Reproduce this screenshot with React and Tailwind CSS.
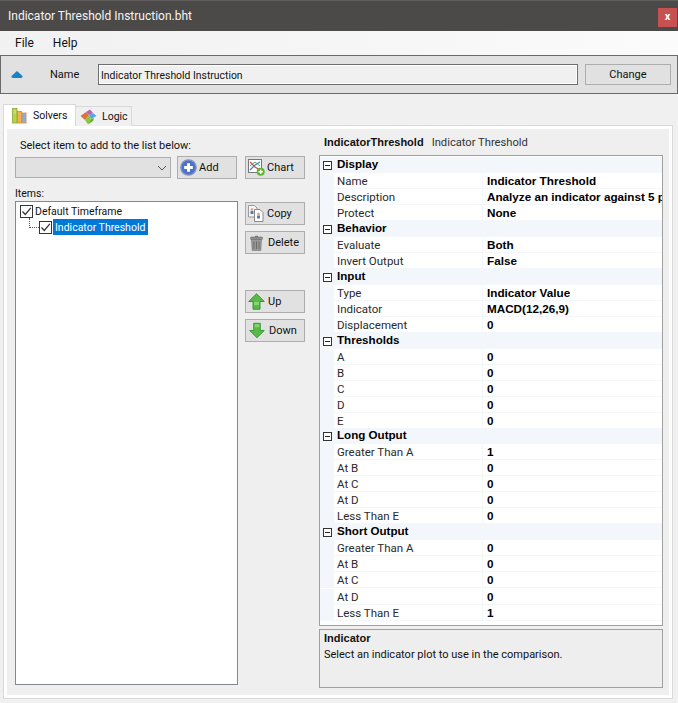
import React from "react";

const sections = [
    { title: "Display", rows: [["Name", "Indicator Threshold"], ["Description", "Analyze an indicator against 5 price levels"], ["Protect", "None"]] },
    { title: "Behavior", rows: [["Evaluate", "Both"], ["Invert Output", "False"]] },
    { title: "Input", rows: [["Type", "Indicator Value"], ["Indicator", "MACD(12,26,9)"], ["Displacement", "0"]] },
    { title: "Thresholds", rows: [["A", "0"], ["B", "0"], ["C", "0"], ["D", "0"], ["E", "0"]] },
    { title: "Long Output", rows: [["Greater Than A", "1"], ["At B", "0"], ["At C", "0"], ["At D", "0"], ["Less Than E", "0"]], className: "-mt-px" },
    { title: "Short Output", rows: [["Greater Than A", "0"], ["At B", "0"], ["At C", "0"], ["At D", "0"], ["Less Than E", "1"]], stepBefore: "At D" },
];

const BooksIcon = () => (
    <svg width="15" height="16" viewBox="0 0 15 16" className="shrink-0">
        <rect x="0.500" y="0.500" width="4.500" height="14.500" fill="#b5d34a" stroke="#8aa838" strokeWidth="0.800" />
        <path d="M1.500 3h2.500M1.500 5h2.500" stroke="#e6f0b0" strokeWidth="0.700" />
        <rect x="5.500" y="3.500" width="4" height="11.500" fill="#f6b04c" stroke="#d98a2a" strokeWidth="0.800" />
        <rect x="10" y="5" width="4" height="10" fill="#7fb2e5" stroke="#e58a4a" strokeWidth="0.900" />
    </svg>
);

const PuzzleIcon = () => (
    <svg width="17" height="16" viewBox="0 0 17 16" className="shrink-0">
        <path d="M0.500 7 L6 3 L9 6 L5 11 Z" fill="#e2703a" />
        <path d="M6 3 L10 0.500 L13 4 L9 6 Z" fill="#c05fb5" />
        <path d="M9 6 L13 4 L16.500 7 L11 10 Z" fill="#5aa5e0" />
        <path d="M5 11 L9 6 L11 10 L8 15.500 Z" fill="#8cc63f" />
        <path d="M11 10 L14 9 L13 12 L8 15.500 Z" fill="#5fae3a" />
    </svg>
);

const AddIcon = () => (
    <svg width="17" height="17" viewBox="0 0 17 17" className="shrink-0">
        <circle cx="8.500" cy="8.500" r="7.700" fill="#4b74c9" stroke="#8d94bf" strokeWidth="1.300" />
        <path d="M8.500 4.200v8.600M4.200 8.500h8.600" stroke="#fff" strokeWidth="3" />
    </svg>
);

const ChartIcon = () => (
    <svg width="17" height="17" viewBox="0 0 17 17" className="shrink-0">
        <rect x="0.500" y="0.500" width="13" height="13" fill="#fff" stroke="#777" />
        <path d="M2 3 L7 8 L12 11" stroke="#d94040" strokeWidth="1.200" fill="none" />
        <path d="M2 11 L7 6 L12 3" stroke="#3f7fd0" strokeWidth="1.200" fill="none" />
        <path d="M2 7 L7 3 L12 7" stroke="#57a84a" strokeWidth="1" fill="none" />
        <circle cx="12.700" cy="12.700" r="4" fill="#5cb531" />
        <path d="M12.700 10.400v4.600M10.400 12.700h4.600" stroke="#fff" strokeWidth="1.400" />
    </svg>
);

const CopyIcon = () => (
    <svg width="16" height="17" viewBox="0 0 16 17" className="shrink-0">
        <path d="M0.500 0.500h6l2.500 2.500v9h-8.500z" fill="#f4f4f4" stroke="#9a9a9a" />
        <path d="M6.500 4.500h5.500l3 3v9h-8.500z" fill="#fff" stroke="#8a8a8a" />
        <circle cx="4" cy="4.500" r="1.300" fill="#d9a27a" />
        <rect x="2.500" y="6" width="3" height="3" fill="#4f7fc0" />
        <circle cx="10.500" cy="9" r="1.300" fill="#d9a27a" />
        <rect x="9" y="10.500" width="3" height="3" fill="#4f7fc0" />
    </svg>
);

const TrashIcon = () => (
    <svg width="13" height="16" viewBox="0 0 13 16" className="shrink-0">
        <path d="M5 1.500h3" stroke="#777" strokeWidth="1.400" />
        <rect x="0.500" y="2" width="12" height="2.500" rx="0.800" fill="#8e8e8e" stroke="#6e6e6e" strokeWidth="0.600" />
        <path d="M1.500 4.500h10l-0.700 11h-8.600z" fill="#9a9a9a" stroke="#6e6e6e" strokeWidth="0.600" />
        <path d="M4 6.500v7.500M6.500 6.500v7.500M9 6.500v7.500" stroke="#6a6a6a" strokeWidth="1" />
    </svg>
);

const UpIcon = () => (
    <svg width="17" height="17" viewBox="0 0 17 17" className="shrink-0">
        <path d="M8.500 0.800 L16.300 8.500 H12 V16.200 H5 V8.500 H0.700 Z" fill="#58bb45" stroke="#2f8f2c" strokeWidth="0.900" />
        <path d="M6 9h5v3H6z" fill="#86d672" />
    </svg>
);

const DownIcon = () => (
    <svg width="16" height="17" viewBox="0 0 17 17" className="shrink-0">
        <path d="M8.500 16.200 L16.300 8.500 H12 V0.800 H5 V8.500 H0.700 Z" fill="#58bb45" stroke="#2f8f2c" strokeWidth="0.900" />
        <path d="M6 2h5v3H6z" fill="#86d672" />
    </svg>
);

const Check = () => (
    <span className="w-[13px] h-[13px] border border-[#333] bg-white shrink-0 flex items-center justify-center">
        <svg width="11" height="11" viewBox="0 0 11 11">
            <path d="M1.500 5.500 L4.300 8.500 L9.800 1.800" stroke="#333" strokeWidth="1.200" fill="none" />
        </svg>
    </span>
);

const ToolButton = ({ icon, label, className = "" }) => (
    <button className={`w-[60px] h-[23px] flex items-center border border-[#adadad] bg-[#e1e1e1] text-[#111] ${className}`}>
        {icon}
        <span className="pt-[2px]">{label}</span>
    </button>
);

const Section = ({ title, rows, stepBefore, className = "" }) => (
    <div className={className}>
        <div className="h-4 pb-[2px] flex items-center bg-[#f3f6fb]">
            <span className="ml-[3px] mt-[2px] w-[9px] h-[9px] border border-[#333] bg-white flex items-center justify-center">
                <span className="w-[5px] h-px bg-[#222]" />
            </span>
            <span className="ml-[5px] font-bold text-[11.600px] text-black font-['Liberation_Sans',sans-serif]">{title}</span>
        </div>
        {rows.map(([name, value]) => (
            <div key={name} className={`h-4 flex ${name === stepBefore ? "mt-px" : ""}`}>
                <div className="w-[14px] bg-[#f3f6fb] shrink-0" />
                <div className="w-[149px] shrink-0 pl-[3px] text-[11.500px] text-[#2a2a2a] border-r border-b border-[#f3f6fb] leading-[16px]">{name}</div>
                <div className="flex-1 pl-[4px] font-bold text-[11.700px] font-['Liberation_Sans',sans-serif] text-black border-b border-[#f3f6fb] whitespace-nowrap overflow-hidden leading-[16px]">{value}</div>
            </div>
        ))}
    </div>
);

export default function App() {
    return (
        <div className="w-[678px] h-[703px] bg-[#f0f0f0] flex flex-col overflow-hidden font-['Roboto',sans-serif] text-[11px] text-[#111]">
            {/* Title bar */}
            <div className="h-[31px] shrink-0 bg-[#4c4a48] border-t border-[#5f5d5b] flex items-center pl-2 pr-px text-[#f4f4f4] text-[12px]">
                <span className="flex-1">Indicator Threshold Instruction.bht</span>
                <span className="w-[19px] h-[19px] bg-[#c75050] text-white flex items-center justify-center font-bold text-[11px] mt-[3px]">x</span>
            </div>

            {/* Menu */}
            <div className="h-6 shrink-0 bg-linear-to-r from-[#f1f1f1] to-[#fbfbfb] flex items-center pl-[15px] gap-[19px] text-[12px]">
                <span>File</span>
                <span>Help</span>
            </div>

            {/* Name row */}
            <div className="h-[39px] shrink-0 border border-[#6a6a6a] bg-[#e1e1e1] flex items-center pl-[10px]">
                <svg width="12" height="7" viewBox="0 0 12 7" className="shrink-0">
                    <path d="M6 0 L11.500 5 Q12 7 10 7 H2 Q0 7 0.500 5 Z" fill="#1b82c4" />
                </svg>
                <span className="ml-[27px] w-[48px] shrink-0 pt-[2px]">Name</span>
                <div className="w-[480px] h-[21px] border border-[#6e6e6e] bg-[#f0f0f0] shadow-[inset_0_0_0_1px_#fff] flex items-center pl-[2px] pt-[2px] text-[10.400px]">
                    Indicator Threshold Instruction
                </div>
                <button className="ml-[7px] w-[86px] h-[21px] pt-[2px] border border-[#adadad] bg-[#e1e1e1]">Change</button>
            </div>

            {/* Tabs */}
            <div className="flex items-end pl-[3px] mt-[10px] h-[22px] shrink-0 relative z-10 -mb-px text-[10.500px]">
                <div className="w-[73px] h-[22px] bg-white border border-b-0 border-[#d9d9d9] flex items-center pl-2 gap-[6px]">
                    <BooksIcon />
                    <span>Solvers</span>
                </div>
                <div className="w-[56px] h-[20px] bg-[#f0f0f0] border border-l-0 border-b-0 border-[#d9d9d9] flex items-center pl-[4px] gap-[5px]">
                    <PuzzleIcon />
                    <span className="pt-px">Logic</span>
                </div>
            </div>

            {/* Tab page */}
            <div className="w-[670px] h-[574px] ml-[3px] shrink-0 border border-[#d9d9d9] bg-white p-[3px]">
                <div className="h-full bg-[#efefef] flex pl-2">
                    <div className="w-[223px] shrink-0 flex flex-col pb-[10px]">
                        <div className="ml-[5px] mt-[9px] h-[17px] flex items-center">Select item to add to the list below:</div>
                        <div className="flex mt-px items-center">
                            <div className="w-[156px] h-[21px] border border-[#adadad] bg-[#e1e1e1] flex items-center justify-end pr-[3px]">
                                <svg width="10" height="6" viewBox="0 0 10 6">
                                    <path d="M1 1 L5 5 L9 1" stroke="#555" fill="none" />
                                </svg>
                            </div>
                            <ToolButton icon={<AddIcon />} label="Add" className="ml-[6px] pl-[2px] gap-[2px]" />
                        </div>
                        <div className="mt-[6px] h-4 pt-px flex items-center text-[10.500px]">Items:</div>
                        <div className="flex-1 border border-[#828790] bg-white relative text-[10.500px]">
                            <div className="absolute left-[13px] top-[16px] h-[10px] w-[10px] border-l border-b border-dotted border-[#555]" />
                            <div className="flex items-center h-4 mt-px ml-1 gap-[2px]">
                                <Check />
                                <span className="pt-[2px]">Default Timeframe</span>
                            </div>
                            <div className="flex items-center h-4 ml-[23px]">
                                <Check />
                                <span className="bg-[#0078d7] text-white h-4 w-[95px] ml-px pl-[2px] leading-[18px] whitespace-nowrap">Indicator Threshold</span>
                            </div>
                        </div>
                    </div>

                    <div className="ml-[7px] w-[60px] shrink-0 flex flex-col pt-[27px]">
                        <ToolButton icon={<ChartIcon />} label="Chart" className="pl-[2px] gap-[2px]" />
                        <ToolButton icon={<CopyIcon />} label="Copy" className="mt-[23px] pl-[2px] gap-[3px]" />
                        <ToolButton icon={<TrashIcon />} label="Delete" className="mt-[6px] pl-[4px] gap-[5px]" />
                        <ToolButton icon={<UpIcon />} label="Up" className="mt-[36px] pl-[2px] gap-[3px]" />
                        <ToolButton icon={<DownIcon />} label="Down" className="mt-[6px] pl-[3px] gap-[4px]" />
                    </div>

                    <div className="ml-[14px] w-[344px] shrink-0 flex flex-col">
                        <div className="h-[26px] pl-[5px] pt-[6px] flex gap-[8px]">
                            <span className="font-bold text-[11px] font-['Liberation_Sans',sans-serif] leading-[15px]">IndicatorThreshold</span>
                            <span className="text-[#333] text-[11.200px] leading-[15px]">Indicator Threshold</span>
                        </div>
                        <div className="h-[471px] pt-px border border-[#a0a0a0] bg-white overflow-hidden">
                            {sections.map((s) => (
                                <Section key={s.title} title={s.title} rows={s.rows} stepBefore={s.stepBefore} className={s.className} />
                            ))}
                        </div>
                        <div className="mt-[3px] h-[59px] border border-[#a0a0a0] bg-[#eeeeee] px-1 leading-4">
                            <div className="font-bold text-[11px] font-['Liberation_Sans',sans-serif]">Indicator</div>
                            <div className="pt-px">Select an indicator plot to use in the comparison.</div>
                        </div>
                    </div>
                </div>
            </div>
        </div>
    );
}
